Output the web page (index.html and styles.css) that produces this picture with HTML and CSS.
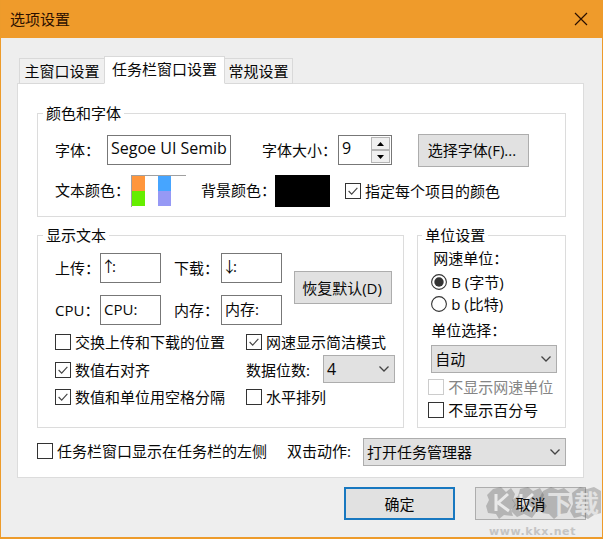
FILE: index.html
```
<!DOCTYPE html>
<html lang="zh-CN">
<head>
<meta charset="utf-8">
<title>选项设置</title>
<link rel="stylesheet" href="styles.css">
</head>
<body>
<div class="window">
  <header class="titlebar">
    <span class="title">选项设置</span>
    <svg class="close" width="14" height="14" viewBox="0 0 14 14"><path d="M1 1L13 13M13 1L1 13"/></svg>
  </header>
  <nav class="tabs">
    <span class="tab tab-main">主窗口设置</span>
    <span class="tab tab-active">任务栏窗口设置</span>
    <span class="tab tab-general">常规设置</span>
  </nav>
  <main class="panel">
    <section class="group group-font">
      <h2 class="legend">颜色和字体</h2>
      <div class="row font-row">
        <span class="label label-font">字体：</span>
        <span class="input font-name">Segoe UI Semib</span>
        <span class="label label-size">字体大小：</span>
        <span class="input spin"><span class="spin-value">9</span>
          <span class="spin-buttons">
            <span class="spin-button"><svg width="7" height="4" viewBox="0 0 7 4"><path d="M0 4L3.5 0L7 4Z"/></svg></span>
            <span class="spin-button"><svg width="7" height="4" viewBox="0 0 7 4"><path d="M0 0L3.5 4L7 0Z"/></svg></span>
          </span>
        </span>
        <span class="button choose-font">选择字体(F)...</span>
      </div>
      <div class="row color-row">
        <span class="label label-text-color">文本颜色：</span>
        <span class="swatches"><i class="orange"></i><i></i><i class="blue"></i><i class="green"></i><i></i><i class="violet"></i></span>
        <span class="label label-back">背景颜色：</span>
        <span class="black"></span>
        <span class="check each-color"><svg class="box" viewBox="0 0 16 16"><path d="M3 8L6.5 11.5L13 4.5"/></svg>指定每个项目的颜色</span>
      </div>
    </section>
    <div class="columns">
      <section class="group group-text">
        <h2 class="legend">显示文本</h2>
        <div class="text-top">
          <div class="text-fields">
            <span class="label">上传：</span><span class="input direction">↑:</span>
            <span class="label label-second">下载：</span><span class="input direction">↓:</span>
            <span class="label">CPU：</span><span class="input">CPU:</span>
            <span class="label label-second">内存：</span><span class="input">内存:</span>
          </div>
          <span class="button restore">恢复默认(D)</span>
        </div>
        <div class="text-options">
          <div class="option-column left-options">
            <span class="check"><svg class="box" viewBox="0 0 16 16"></svg>交换上传和下载的位置</span>
            <span class="check"><svg class="box" viewBox="0 0 16 16"><path d="M3 8L6.5 11.5L13 4.5"/></svg>数值右对齐</span>
            <span class="check"><svg class="box" viewBox="0 0 16 16"><path d="M3 8L6.5 11.5L13 4.5"/></svg>数值和单位用空格分隔</span>
          </div>
          <div class="option-column">
            <span class="check"><svg class="box" viewBox="0 0 16 16"><path d="M3 8L6.5 11.5L13 4.5"/></svg>网速显示简洁模式</span>
            <span class="digits"><span class="label digits-label">数据位数:</span><span class="select digits-select">4<svg class="arrow" viewBox="0 0 10 6"><path d="M.5 .5L5 5L9.500 .5"/></svg></span></span>
            <span class="check"><svg class="box" viewBox="0 0 16 16"></svg>水平排列</span>
          </div>
        </div>
      </section>
      <section class="group group-unit">
        <h2 class="legend">单位设置</h2>
        <span class="label unit-label">网速单位：</span>
        <span class="check radio"><svg class="circle" viewBox="0 0 16 16"><circle cx="8" cy="8" r="7.400"/><circle class="dot" cx="8" cy="8" r="4.700"/></svg>B (字节)</span>
        <span class="check radio"><svg class="circle" viewBox="0 0 16 16"><circle cx="8" cy="8" r="7.400"/></svg>b (比特)</span>
        <span class="label choose-label">单位选择：</span>
        <span class="select unit-select">自动<svg class="arrow" viewBox="0 0 10 6"><path d="M.5 .5L5 5L9.500 .5"/></svg></span>
        <span class="check unit-check disabled"><svg class="box" viewBox="0 0 16 16"></svg>不显示网速单位</span>
        <span class="check unit-check"><svg class="box" viewBox="0 0 16 16"></svg>不显示百分号</span>
      </section>
    </div>
    <div class="row bottom-row">
      <span class="check left-side"><svg class="box" viewBox="0 0 16 16"></svg>任务栏窗口显示在任务栏的左侧</span>
      <span class="label action-label">双击动作:</span>
      <span class="select action-select">打开任务管理器<svg class="arrow" viewBox="0 0 10 6"><path d="M.5 .5L5 5L9.500 .5"/></svg></span>
    </div>
  </main>
  <footer class="footer">
    <span class="button ok">确定</span>
    <span class="button cancel"><span class="cancel-text">取消</span></span>
  </footer>
  <div class="watermark">
    <svg class="blobs" width="116" height="34" viewBox="0 0 116 34">
      <path class="blob" d="M7 3L15 1L20 6L25 2L29 8L27 14L30 19L25 24L27 30L18 29L13 33L10 28L2 27L0 20L3 14L1 9Z"/>
      <path class="blob" d="M34 3L42 1L47 5L54 2L58 9L56 14L61 20L57 26L51 25L46 32L38 28L31 31L25 25L29 18L26 14L32 10Z"/>
      <path class="blob" d="M57 5L65 1L72 4L78 2L84 7L82 14L85 19L81 27L74 28L68 33L63 28L56 27L57 19L53 13Z"/>
      <path class="blob" d="M86 7L94 1L101 3L108 1L115 5V27L108 29L102 33L96 30L88 32L84 25L87 18Z"/>
      <path class="mark" d="M10 8V25M22 8L12 17L23 25M35 8V25M47 8L37 17L48 25"/>
    </svg>
    <span class="mark-text">下载</span>
    <span class="mark-url">www.kkx.net</span>
  </div>
</div>
</body>
</html>
```
FILE: styles.css
```
* { box-sizing: border-box; }
body { margin: 0; }
.window {
  position: relative;
  width: 603px;
  height: 539px;
  overflow: hidden;
  background: #eee;
  border: solid #ed9b2b;
  border-width: 0 1px 2px;
  font: 15px/20px "Open Sans", "Noto Sans CJK SC", sans-serif;
  color: #080808;
  white-space: nowrap;
}
.titlebar {
  display: flex;
  justify-content: space-between;
  align-items: center;
  height: 38px;
  margin: 0 -1px;
  padding: 0 15px 0 10px;
  background: #ef9b2b;
  color: #2b1000;
}
.close { fill: none; stroke: #2b1000; stroke-width: 1.2; }
.tabs {
  display: flex;
  align-items: flex-end;
  height: 46px;
  padding-left: 18px;
  position: relative;
}
.tab {
  height: 26px;
  border: 1px solid #d9d9d9;
  background: #f0f0f0;
  text-align: center;
  line-height: 25px;
}
.tab-main { width: 85px; border-right: 0; }
.tab-active { width: 121px; height: 28px; background: #fff; border-bottom-color: #fff; }
.tab-general { width: 68px; border-left: 0; }
.panel {
  width: 567px;
  height: 395px;
  margin: -1px 0 0 16px;
  padding: 29px 17px 0 19px;
  border: 1px solid #dcdcdc;
  background: #fff;
}
.row { display: flex; align-items: center; }
.group { border: 1px solid #dcdcdc; }
.group-font { width: 529px; height: 104px; }
.legend {
  width: max-content;
  height: 20px;
  margin: -11px 0 0 5px;
  padding: 0 3px;
  background: #fff;
  font: inherit;
}
.label { flex: none; }
.input {
  flex: none;
  height: 30px;
  border: 1px solid #777;
  background: #fff;
  padding-left: 3px;
  line-height: 27px;
}
.button {
  display: flex;
  flex: none;
  align-items: center;
  justify-content: center;
  height: 33px;
  border: 1px solid #adadad;
  background: #e1e1e1;
  line-height: 18px;
}
.font-row { height: 34px; margin-top: 10px; padding-left: 17px; }
.label-font { width: 52px; }
.font-name { width: 124px; overflow: hidden; font-size: 16px; line-height: 25px; }
.label-size { width: 76px; margin-left: 31px; }
.spin { display: flex; width: 54px; justify-content: space-between; }
.spin-value { font-size: 16px; line-height: 25px; }
.spin-buttons { display: flex; flex-direction: column; width: 21px; padding: 1px; }
.spin-button {
  display: flex;
  flex: 1;
  align-items: center;
  justify-content: center;
  border: 1px solid #b5b5b5;
  background: #f0f0f0;
}
.choose-font { width: 111px; margin-left: 26px; padding-right: 3px; }
.color-row { height: 33px; margin-top: 7px; padding-left: 17px; }
.color-row .label { margin-top: -2px; }
.label-text-color { width: 76px; }
.swatches {
  display: grid;
  grid-template-columns: 13px 13px 13px;
  grid-template-rows: 15px 15px;
  width: 55px;
  height: 32px;
  border: solid #a0a0a0;
  border-width: 1px 0 0 1px;
}
.orange { background: #ff963c; }
.blue { background: #46a5ff; }
.green { background: #66ee00; }
.violet { background: #9699f5; }
.label-back { width: 74px; margin-left: 15px; }
.black { width: 55px; height: 32px; background: #000; }
.check { display: flex; align-items: center; height: 20px; gap: 4px; }
.each-color { margin: 1px 0 0 15px; }
.box {
  flex: none;
  width: 16px;
  height: 16px;
  border: 1px solid #333;
  background: #fff;
}
.box path, .arrow path { fill: none; stroke: #444; stroke-width: 1.3; }
.columns { display: flex; gap: 13px; margin-top: 18px; }
.group-text { width: 368px; height: 193px; }
.text-top { display: flex; height: 73px; margin: 8px 0 0 17px; }
.text-fields {
  display: grid;
  grid-template-columns: 45px 61px 60px 61px;
  grid-template-rows: 30px 30px;
  row-gap: 12px;
  align-items: center;
  align-content: start;
}
.label-second { padding-left: 13px; }
.direction { text-indent: -3px; letter-spacing: -4px; line-height: 25px; }
.restore { width: 98px; margin: 18px 0 0 12px; padding-right: 2px; }
.text-options { display: flex; margin: 6px 0 0 17px; }
.left-options { width: 191px; }
.option-column { display: grid; grid-template-rows: 20px 20px 20px; row-gap: 7.500px; }
.digits { display: flex; align-items: center; height: 20px; }
.digits-label { width: 77px; }
.digits-select { width: 72px; margin-top: -2px; font-size: 16px; }
.select {
  display: flex;
  flex: none;
  align-items: center;
  justify-content: space-between;
  height: 28px;
  padding: 0 5px 0 3px;
  border: 1px solid #adadad;
  background: #e1e1e1;
}
.arrow { width: 10px; height: 6px; }
.group-unit { display: flex; flex-direction: column; width: 149px; height: 193px; }
.group-unit .legend { margin-left: 4px; }
.unit-label { margin: 3px 0 0 15px; }
.radio { height: 22px; gap: 4px; margin-left: 13px; }
.unit-label + .radio { margin-top: 3px; }
.circle { width: 16px; height: 16px; fill: #fff; stroke: #333; stroke-width: 1.1; }
.circle .dot { fill: #333; stroke: none; }
.choose-label { margin: 5px 0 0 13px; }
.unit-select { width: 126px; margin: 5px 0 2px 13px; }
.unit-check { height: 23px; margin-left: 10px; }
.disabled { color: #858585; }
.disabled .box { border-color: #ccc; }
.bottom-row { height: 28px; margin-top: 10px; }
.left-side { width: 250px; margin-top: -3px; }
.action-label { width: 76px; margin-top: -2px; }
.action-select { width: 203px; }
.footer { display: flex; gap: 20px; margin: 9px 0 0 343px; }
.ok, .cancel { width: 111px; height: 33px; }
.ok { border: 2px solid #1878c0; }
.cancel-text { position: relative; z-index: 2; }
.watermark { position: absolute; left: 485px; top: 486px; width: 117px; height: 52px; }
.blobs { display: block; }
.blob { fill: #606060; opacity: .35; }
.mark { fill: none; stroke: #e9e9e9; stroke-width: 3; }
.mark-text {
  position: absolute;
  left: 61px;
  top: 2px;
  font-size: 25px;
  line-height: 30px;
  letter-spacing: 2px;
  font-weight: bold;
  color: #e9e9e9;
  opacity: .85;
}
.mark-url {
  position: absolute;
  left: 3px;
  top: 38px;
  font: bold 11px/16px "DejaVu Sans", sans-serif;
  letter-spacing: .6px;
  color: #c4c4c4;
}
```
